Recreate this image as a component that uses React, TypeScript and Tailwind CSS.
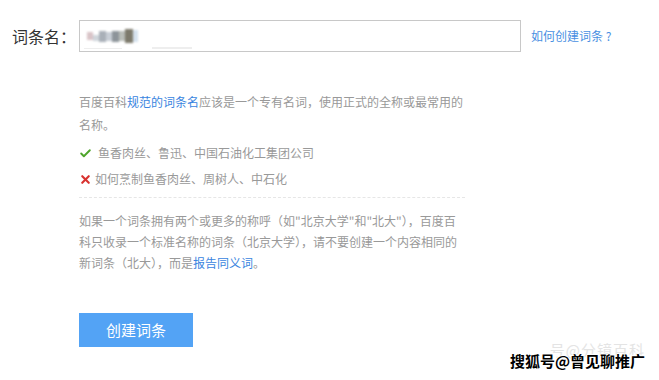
import { Check, X } from 'lucide-react';

const font = { fontFamily: '"Noto Sans CJK SC", "Microsoft YaHei", sans-serif' };

const BlurredName = () => (
    <div className="flex items-center h-[14px] blur-[1px]">
        <span className="w-[6px] h-[8px] bg-[#d9c4c8]" />
        <span className="w-[6px] h-[6px] bg-[#cfd5db] mt-1" />
        <span className="w-[7px] h-[11px] bg-[#a9b0b8]" />
        <span className="w-[6px] h-[9px] bg-[#c8ced6]" />
        <span className="w-[7px] h-[11px] bg-[#8d949a]" />
        <span className="w-[6px] h-[10px] bg-[#b9bdb8]" />
        <span className="w-[8px] h-[14px] bg-[#7d7a6c]" />
        <span className="w-[5px] h-[12px] bg-[#d5e2ee]" />
    </div>
);

export default function App() {
    return (
        <div className="relative w-[659px] h-[380px] bg-white overflow-hidden" style={font}>
            <div className="flex items-center pt-[20px] pl-[12px]">
                <span className="w-[67px] shrink-0 whitespace-nowrap text-[16px] text-[#333]">词条名：</span>
                <div className="relative w-[442px] h-[32px] shrink-0 border border-[#c8c8c8] flex items-center pl-[7px]">
                    <BlurredName />
                    <div className="absolute left-[4px] bottom-[2px] w-[38px] h-px bg-[#eeeeee]" />
                    <div className="absolute left-[72px] bottom-[2px] w-[40px] h-[2px] bg-[#eeeeee]" />
                </div>
                <a className="ml-[10px] whitespace-nowrap text-[12px] text-[#4a90e2]">如何创建词条 ?</a>
            </div>

            <div className="ml-[79px] mt-[38px] w-[400px] text-[12px] text-[#999] whitespace-nowrap">
                <div className="leading-[23px]">
                    <div>
                        百度百科<span className="text-[#3a85e0]">规范的词条名</span>应该是一个专有名词，使用正式的全称或最常用的
                    </div>
                    <div>名称。</div>
                </div>
                <div className="flex items-center mt-[4px] h-[26px]">
                    <Check className="w-[13px] h-[13px] text-[#4ea52b]" strokeWidth={3.5} />
                    <span className="ml-[6px]">鱼香肉丝、鲁迅、中国石油化工集团公司</span>
                </div>
                <div className="flex items-center h-[26px]">
                    <X className="w-[13px] h-[13px] text-[#d8322f]" strokeWidth={4} />
                    <span className="ml-[3px]">如何烹制鱼香肉丝、周树人、中石化</span>
                </div>
                <div className="mt-[5px] w-[386px] border-t border-dashed border-[#e6e6e6]" />
                <div className="mt-[12px] leading-[21px]">
                    <div>如果一个词条拥有两个或更多的称呼（如"北京大学"和"北大"），百度百</div>
                    <div>科只收录一个标准名称的词条（北京大学），请不要创建一个内容相同的</div>
                    <div>
                        新词条（北大），而是<span className="text-[#3a85e0]">报告同义词</span>。
                    </div>
                </div>
                <button className="mt-[40px] w-[114px] h-[34px] bg-[#53a3f5] text-white text-[15px]">创建词条</button>
            </div>

            <div className="absolute right-[14px] bottom-[19px] text-[15px] text-[#e4e4e4] tracking-[1px]">号@分镜百科</div>
            <div
                className="absolute right-[14px] bottom-[8px] text-[15px] font-bold text-black"
                style={{ textShadow: '1px 0 #fff, -1px 0 #fff, 0 1px #fff, 0 -1px #fff' }}
            >
                搜狐号@曾见聊推广
            </div>
        </div>
    );
}
